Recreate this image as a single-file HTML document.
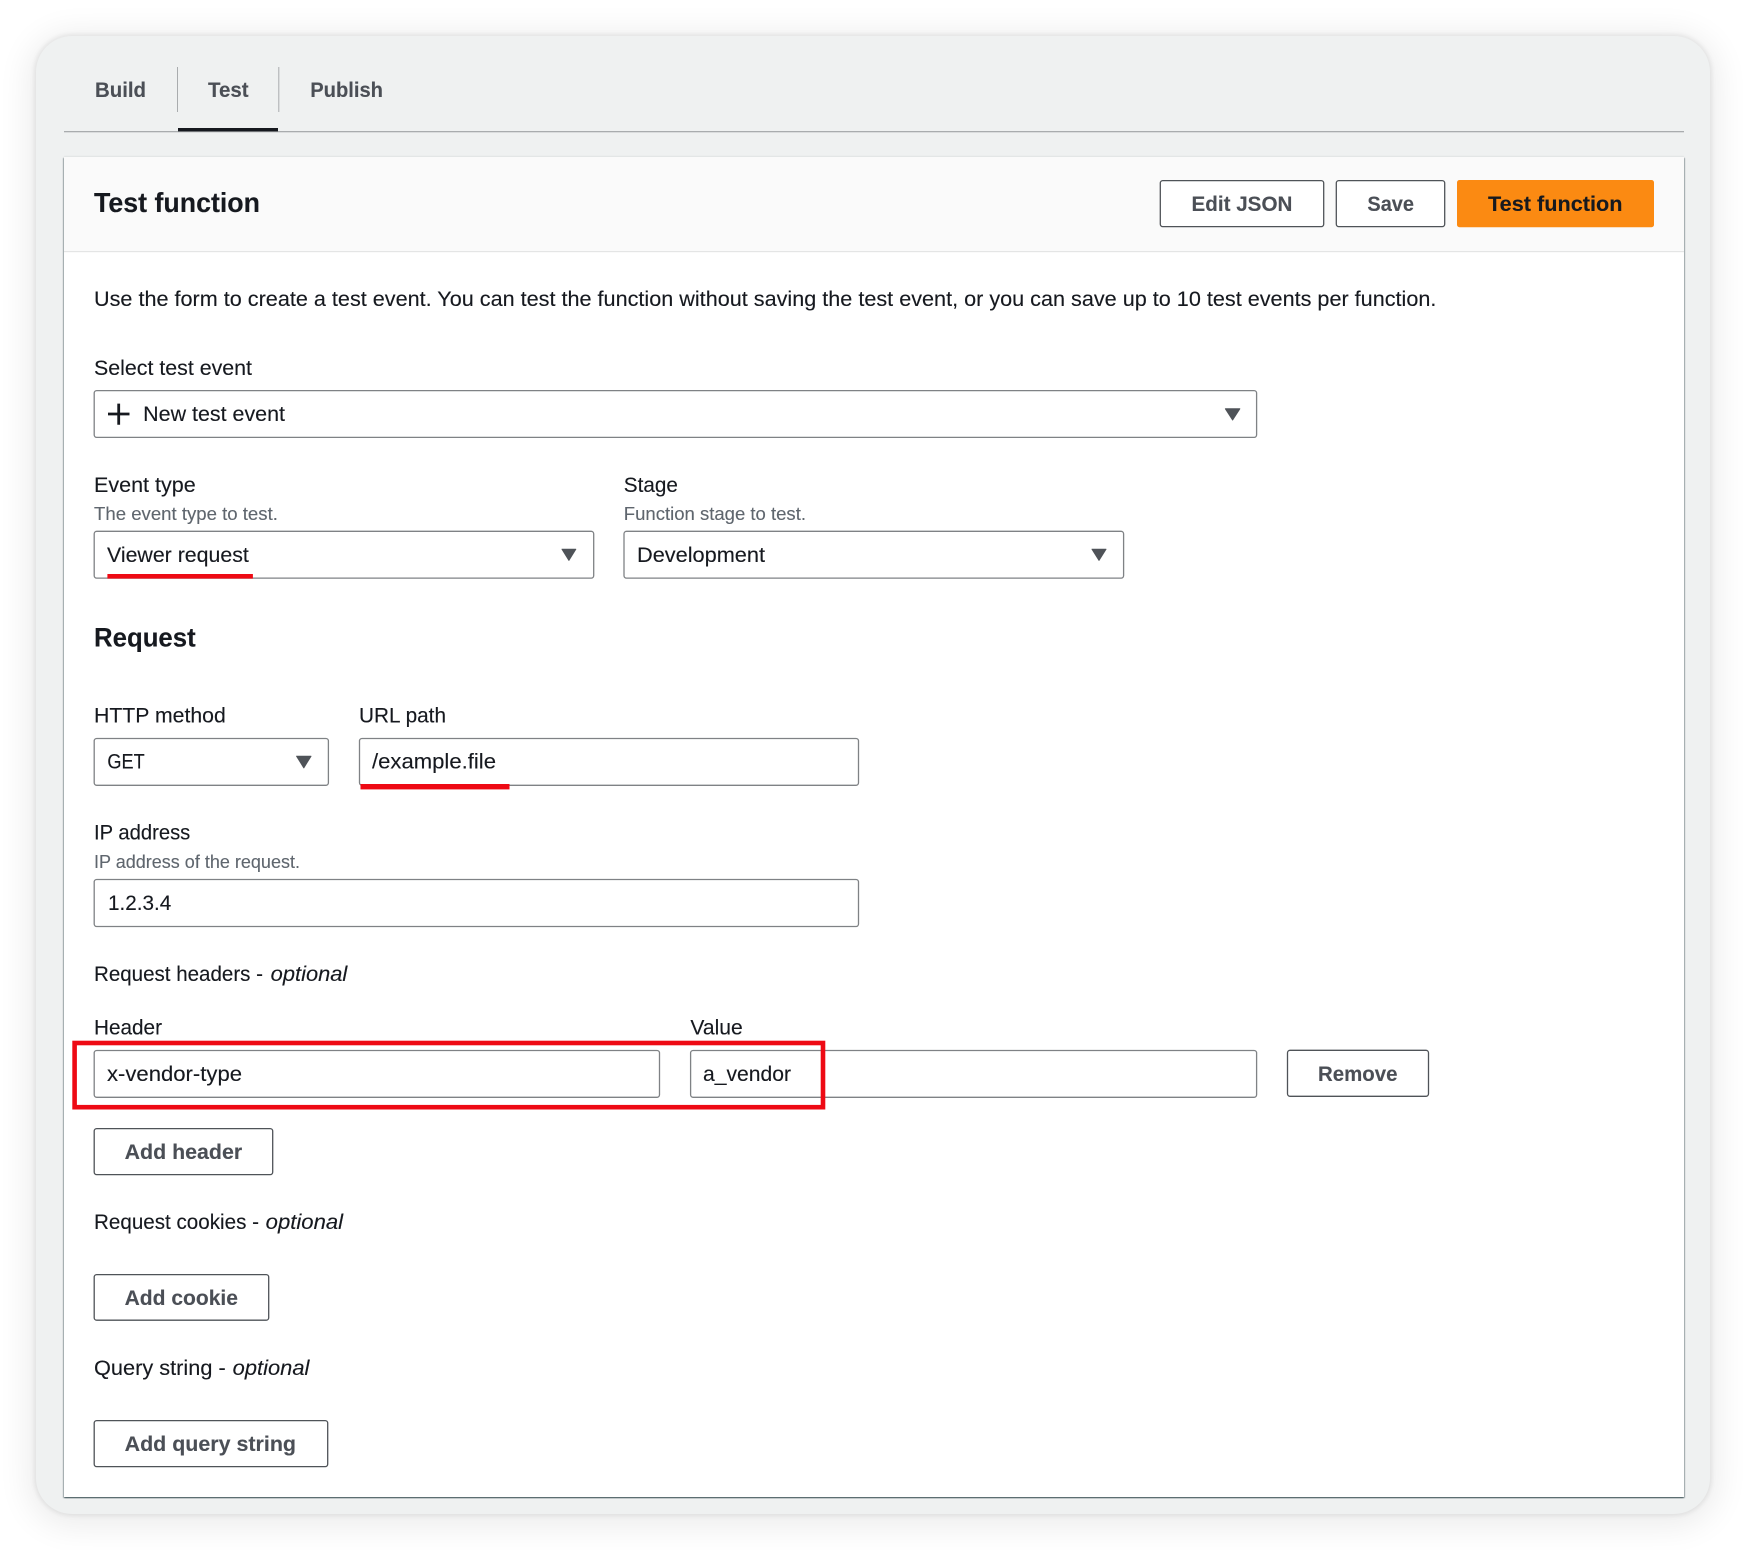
<!DOCTYPE html>
<html lang="en">
<head>
<meta charset="utf-8">
<title>Test function</title>
<style>
html,body{margin:0;padding:0;background:#fff;width:1746px;height:1550px;overflow:hidden}
#card{position:absolute;left:36px;top:36px;width:1674px;height:1478px;border-radius:36px;background:#eff1f1;box-shadow:0 0 4px 2px rgba(0,0,0,.07),0 5px 32px 8px rgba(0,0,0,.075)}
#panel{position:absolute;left:64px;top:157px;width:1620px;height:1340px;background:#fff;box-shadow:0 1px 1px 0 rgba(0,28,36,.45),1px 1px 1px 0 rgba(0,28,36,.28),-1px 1px 1px 0 rgba(0,28,36,.28),0 -1px 1px 0 rgba(0,28,36,.06)}
svg{position:absolute;left:0;top:0}
text{font-family:"Liberation Sans",sans-serif;font-size:21px;fill:#16191f;stroke:#16191f;stroke-width:.12px}
.b{font-weight:700}
.tab{font-weight:700;font-size:21.5px;fill:#4b4f56;stroke:#4b4f56}
.btn{font-weight:700;font-size:21.5px;fill:#4b4f56;stroke:#4b4f56}
.help{font-size:18.6px;fill:#5f666e;stroke:#5f666e}
.i{font-style:italic}
.box{fill:#fff;stroke:#7f8285;stroke-width:1.3}
.bt{fill:#fff;stroke:#4f5358;stroke-width:1.3}
.ar{fill:#4f5358;stroke:#4f5358;stroke-width:1;stroke-linejoin:round}
</style>
</head>
<body>
<div id="card"></div>
<div id="panel"></div>
<svg width="1746" height="1550" viewBox="0 0 1746 1550" xmlns="http://www.w3.org/2000/svg">
<!-- tabs -->
<rect x="64" y="131" width="1620" height="1.3" fill="#a9acae"/>
<rect x="177" y="67" width="1" height="45" fill="#a9acae"/>
<rect x="278.3" y="67" width="1" height="45" fill="#a9acae"/>
<rect x="178" y="128" width="100" height="3.4" fill="#16191f"/>
<text class="tab" x="95" y="97" textLength="51" lengthAdjust="spacingAndGlyphs">Build</text>
<text class="tab" x="208" y="97" textLength="40.6" lengthAdjust="spacingAndGlyphs">Test</text>
<text class="tab" x="310.2" y="97" textLength="72.8" lengthAdjust="spacingAndGlyphs">Publish</text>

<!-- header -->
<rect x="64" y="157" width="1620" height="94.5" fill="#fafafa"/>
<rect x="64" y="251" width="1620" height="1.2" fill="#e4e5e5"/>
<text class="b" x="94" y="212" style="font-size:27.5px" textLength="166" lengthAdjust="spacingAndGlyphs">Test function</text>
<rect class="bt" x="1160.3" y="180.6" width="163.4" height="46" rx="2.5"/>
<rect class="bt" x="1336.3" y="180.6" width="108.4" height="46" rx="2.5"/>
<rect x="1457" y="180" width="197" height="47.2" rx="2.5" fill="#fb8a12"/>
<text class="btn" x="1191.5" y="211" textLength="100.9" lengthAdjust="spacingAndGlyphs">Edit JSON</text>
<text class="btn" x="1367.4" y="211" textLength="46.6" lengthAdjust="spacingAndGlyphs">Save</text>
<text class="btn" x="1488" y="211" textLength="134.5" lengthAdjust="spacingAndGlyphs" style="fill:#16191f;stroke:#16191f">Test function</text>

<!-- intro -->
<text x="94" y="306" textLength="1342.4" lengthAdjust="spacingAndGlyphs">Use the form to create a test event. You can test the function without saving the test event, or you can save up to 10 test events per function.</text>

<!-- select test event -->
<text x="94" y="375" textLength="158" lengthAdjust="spacingAndGlyphs">Select test event</text>
<rect class="box" x="94.2" y="390.6" width="1162.4" height="46.8" rx="2.5"/>
<path d="M108 414H129.5M118.7 403.6V424.8" stroke="#16191f" stroke-width="2.8" fill="none"/>
<text x="143.2" y="421" textLength="141.8" lengthAdjust="spacingAndGlyphs">New test event</text>
<polygon class="ar" points="1225.4,408.8 1239.8,408.8 1232.6,420"/>

<!-- event type / stage -->
<text x="94" y="492" textLength="101.7" lengthAdjust="spacingAndGlyphs">Event type</text>
<text class="help" x="94" y="520" textLength="183.9" lengthAdjust="spacingAndGlyphs">The event type to test.</text>
<rect class="box" x="94.2" y="531.3" width="499.5" height="46.8" rx="2.5"/>
<text x="107" y="562" textLength="141.8" lengthAdjust="spacingAndGlyphs">Viewer request</text>
<polygon class="ar" points="562,549.2 575.8,549.2 568.9,560.4"/>
<rect x="107.4" y="574" width="145.5" height="4.6" fill="#ee0a14"/>

<text x="623.8" y="492" textLength="54.1" lengthAdjust="spacingAndGlyphs">Stage</text>
<text class="help" x="623.8" y="520" textLength="182.2" lengthAdjust="spacingAndGlyphs">Function stage to test.</text>
<rect class="box" x="624" y="531.3" width="499.6" height="46.8" rx="2.5"/>
<text x="637" y="562" textLength="128" lengthAdjust="spacingAndGlyphs">Development</text>
<polygon class="ar" points="1092,549.2 1106,549.2 1099,560.4"/>

<!-- request -->
<text class="b" x="94" y="646.7" style="font-size:26.5px" textLength="101.7" lengthAdjust="spacingAndGlyphs">Request</text>

<text x="94" y="722.7" textLength="131.8" lengthAdjust="spacingAndGlyphs">HTTP method</text>
<text x="359" y="722.7" textLength="87" lengthAdjust="spacingAndGlyphs">URL path</text>
<rect class="box" x="94.2" y="738.5" width="234.2" height="46.8" rx="2.5"/>
<text x="107.4" y="768.7" textLength="37.3" lengthAdjust="spacingAndGlyphs" style="font-size:21.5px">GET</text>
<polygon class="ar" points="296.6,756.2 311,756.2 303.8,767.8"/>
<rect class="box" x="359.5" y="738.5" width="499" height="46.8" rx="2.5"/>
<text x="372" y="768.7" textLength="124" lengthAdjust="spacingAndGlyphs">/example.file</text>
<rect x="360.5" y="784" width="149" height="5.4" fill="#ee0a14"/>

<text x="94" y="839.6" textLength="96.3" lengthAdjust="spacingAndGlyphs">IP address</text>
<text class="help" x="94" y="867.8" textLength="206" lengthAdjust="spacingAndGlyphs">IP address of the request.</text>
<rect class="box" x="94.2" y="879.5" width="764.3" height="47" rx="2.5"/>
<text x="108" y="910" textLength="63.3" lengthAdjust="spacingAndGlyphs">1.2.3.4</text>

<text x="94" y="980.8" textLength="169" lengthAdjust="spacingAndGlyphs">Request headers -</text>
<text class="i" x="270.7" y="980.8" textLength="76.6" lengthAdjust="spacingAndGlyphs">optional</text>

<text x="94" y="1034.6" textLength="68" lengthAdjust="spacingAndGlyphs">Header</text>
<text x="690.4" y="1034.6" textLength="52.3" lengthAdjust="spacingAndGlyphs">Value</text>
<rect class="box" x="94.2" y="1050.5" width="565.3" height="46.8" rx="2.5"/>
<rect class="box" x="690.6" y="1050.5" width="566" height="46.8" rx="2.5"/>
<text x="107" y="1081" textLength="135" lengthAdjust="spacingAndGlyphs">x-vendor-type</text>
<text x="703" y="1081" textLength="88" lengthAdjust="spacingAndGlyphs">a_vendor</text>
<rect x="74.6" y="1043" width="748.4" height="64.2" fill="none" stroke="#ee0a14" stroke-width="4.6"/>
<rect class="bt" x="1287.5" y="1050.3" width="141" height="46" rx="2.5"/>
<text class="btn" x="1318" y="1081" textLength="79.5" lengthAdjust="spacingAndGlyphs">Remove</text>

<rect class="bt" x="94.2" y="1128.6" width="178.5" height="46" rx="2.5"/>
<text class="btn" x="124.6" y="1159" textLength="117.6" lengthAdjust="spacingAndGlyphs">Add header</text>

<text x="94" y="1228.8" textLength="165" lengthAdjust="spacingAndGlyphs">Request cookies -</text>
<text class="i" x="265.7" y="1228.8" textLength="77.4" lengthAdjust="spacingAndGlyphs">optional</text>
<rect class="bt" x="94.2" y="1274.6" width="174.5" height="45.6" rx="2.5"/>
<text class="btn" x="124.6" y="1305" textLength="113.4" lengthAdjust="spacingAndGlyphs">Add cookie</text>

<text x="94" y="1375" textLength="131.7" lengthAdjust="spacingAndGlyphs">Query string -</text>
<text class="i" x="232.7" y="1375" textLength="76.7" lengthAdjust="spacingAndGlyphs">optional</text>
<rect class="bt" x="94.2" y="1420.6" width="233.5" height="46" rx="2.5"/>
<text class="btn" x="124.6" y="1451" textLength="171.4" lengthAdjust="spacingAndGlyphs">Add query string</text>
</svg>
</body>
</html>
